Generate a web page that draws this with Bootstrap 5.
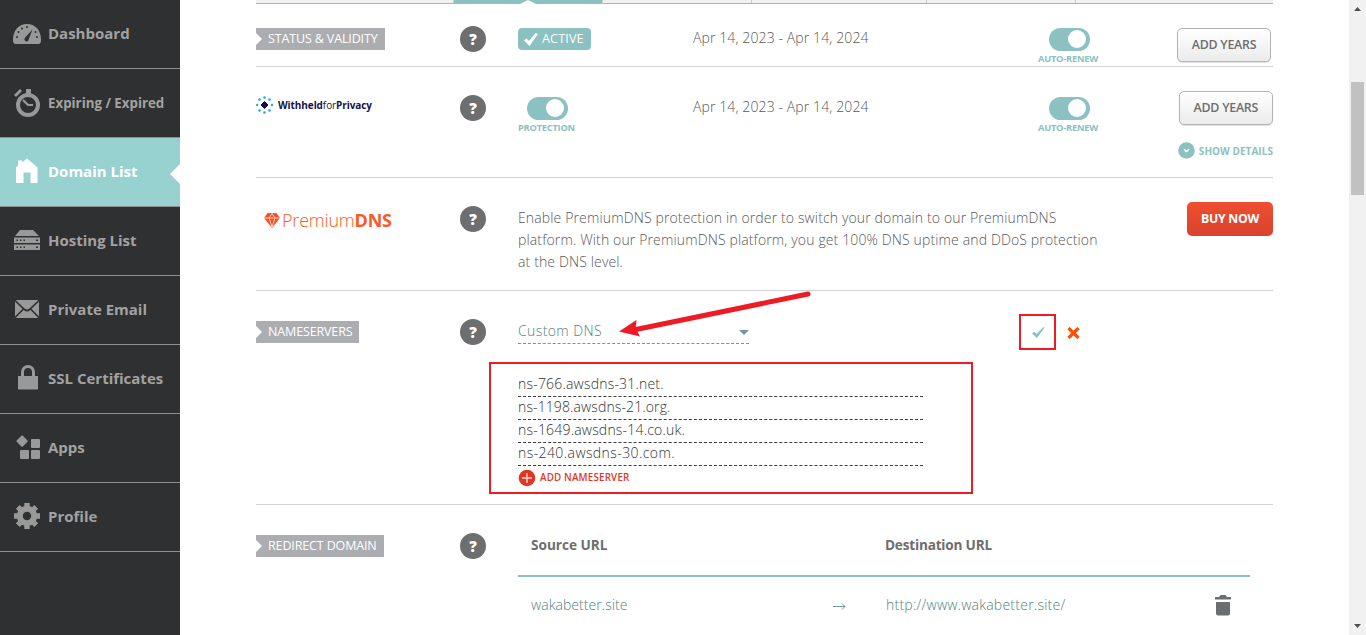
<!DOCTYPE html>
<html lang="en">
<head>
<meta charset="utf-8">
<title>Domain details</title>
<meta name="viewport" content="width=device-width, initial-scale=1">
<link href="https://cdn.jsdelivr.net/npm/bootstrap@5.3.0/dist/css/bootstrap.min.css" rel="stylesheet">
<script src="https://cdn.jsdelivr.net/npm/bootstrap@5.3.0/dist/js/bootstrap.bundle.min.js" defer></script>
<style>
html,body{height:100%;overflow:hidden}
body{font:14px/22px "Open Sans","Noto Sans",sans-serif;color:#6d6e70;background:#fff}
.app{height:635px}
/* sidebar */
.side{width:180px;background:#2f3031}
.side .nav-link{height:69px;padding:0;border-bottom:1px solid #8e8f90;color:#a2a2a2;font-weight:700;font-size:15px;position:relative}
.side .ico{width:48px;padding-left:12px;color:#999}
.side .ico svg{display:block}
.side .nav-link.active{background:#97d2d0;color:#fff}
.side .nav-link.active .ico{color:#fff}
.side .nav-link.active:after{content:"";position:absolute;right:0;top:26px;border:10px solid transparent;border-right-color:#fff;border-left:0}
.side .nav-link .lbl{padding-bottom:3px}
.side .fs-exp{font-size:13.3px}
/* main */
.main{width:1017px;margin-left:76px}
.tabs{height:4px;border-bottom:1px solid #8cc1c1;background:#f1f1f1}
.tabs span{height:3px;border-right:1px solid #ccc}
.tabs .on{background:#8cc1c1;height:4px;position:relative}
.tabs .on:after{content:"";position:absolute;left:66px;bottom:0;border:8px solid transparent;border-bottom:4px solid #fff;border-top:0}
.rowline{border-bottom:1px solid #d3d3d3;position:relative}
.c-label{width:204px}.c-help{width:58px}
.tag{display:inline-block;vertical-align:top;height:22px;line-height:21px;padding:0 7px 0 12px;background:#acadb1;color:#fff;font-size:12.5px;letter-spacing:-.14px;position:relative}
.tag:before{content:"";position:absolute;left:0;top:5px;border:6px solid transparent;border-left-color:#fff;border-right:0}
.help{width:26px;height:26px;border-radius:50%;background:#6d6e70;color:#fff;font-weight:800;font-size:15px;line-height:26px;text-align:center}
.pill{width:73px;height:22px;border-radius:4px;background:#8cc1c1;color:#fff;font-size:12.5px;line-height:21px;padding-left:6px;letter-spacing:.2px}
.pill span{padding-bottom:1px}
.switch{width:41px;height:23px;border-radius:12px;background:#8cc1c1;padding:2px 4px 0 19px}
.switch i{display:block;width:18px;height:18px;border-radius:50%;background:#fff}
.cap{font-size:9.3px;font-weight:700;line-height:14px;color:#8cc1c1;letter-spacing:-.24px;padding-top:1px}
.details{font-size:10px;letter-spacing:.05px;gap:4px;margin-top:16px}
.sw{width:60px}
.btn-years{width:94px;height:34px;padding:0;border:1px solid #b3b3b5;border-radius:5px;background:linear-gradient(#fff,#ebebeb);color:#6d6e70;font-size:12.4px;letter-spacing:-.25px;font-weight:600;box-shadow:0 1px 1px #0002}
.btn-buy{width:86px;height:34px;padding:0;border:0;border-radius:5px;background:linear-gradient(#f04e30,#d8432d);color:#fff;font-size:12.3px;letter-spacing:-.3px;font-weight:700}
.light{font-weight:300;color:#57585a}
.dates{letter-spacing:.11px}
.blurb{letter-spacing:.137px}
.light.teal{color:#4f8381}
.sel{width:231px;height:24px;border-bottom:1px dashed #6d9997;letter-spacing:.4px}
.ns{width:405px;height:23px;border-bottom:1px dashed #3c3c3c;color:#333;line-height:20px;letter-spacing:.2px}
.ns-4{letter-spacing:.42px}
.addns{color:#de3723;font-size:9.8px;font-weight:600;letter-spacing:.18px;line-height:22px}
.addns span{padding-top:1px}
.mark-box{position:absolute;border:2px solid #ed1c24}
.bar{width:17px;background:#f1f1f1}
.thumb{width:13px;height:113px;background:#c1c1c1;margin:auto 0 423px}
.redir{width:732px}
.rhead{height:44px;border-bottom:2px solid #8cc1c1;font-weight:700;font-size:13.6px}
.premium{color:#f95a27;font-size:18px;letter-spacing:-.2px;margin-left:2px}
.premium .light{color:#f95a27}
.withheld{color:#170f49;font-size:10px;letter-spacing:-.08px;margin-left:4px}
</style>
</head>
<body>
<div class="app d-flex">
<nav class="side nav flex-column flex-nowrap flex-shrink-0">
 <a class="nav-link d-flex align-items-center"><span class="ico"><svg width="30" height="30" viewBox="0 0 30 30"><path fill="currentColor" d="M3.500 25Q1 25 1 21C1 11 7 5 15 5s14 6 14 16q0 4-2.500 4Z"/><g fill="#2f3031"><circle cx="5" cy="18" r="1"/><circle cx="6.500" cy="13" r="1"/><circle cx="10" cy="9.500" r="1"/><circle cx="15" cy="8" r="1"/><circle cx="23.500" cy="13" r="1"/><circle cx="25" cy="18" r="1"/><path d="M20.500 10.500 16.800 20a2.200 2.200 0 1 1-3.600-1.500Z"/></g></svg></span><span class="lbl">Dashboard</span></a>
 <a class="nav-link d-flex align-items-center"><span class="ico"><svg width="30" height="30" viewBox="0 0 30 30"><circle cx="16" cy="17" r="10" fill="none" stroke="currentColor" stroke-width="4"/><path fill="currentColor" d="M14 1h5v5h-5ZM2 7l6-6 2 2-6 6Z"/><path d="m11 12 5 5h5" stroke="currentColor" stroke-width="2.200" fill="none"/></svg></span><span class="fs-exp">Expiring / Expired</span></a>
 <a class="nav-link active d-flex align-items-center"><span class="ico"><svg width="30" height="30" viewBox="0 0 30 30"><path fill="currentColor" d="M4 26V10.500l2-2V3.500h4v2l5-4L25.500 10.500V26H18.500V15.500h-7V26Z"/></svg></span><span class="lbl">Domain List</span></a>
 <a class="nav-link d-flex align-items-center"><span class="ico"><svg width="30" height="30" viewBox="0 0 30 30"><path fill="currentColor" d="M8 4h13l6 6H3ZM2 11.500h26V17H2ZM2 18.500h26V24H2Z"/><path fill="#2f3031" d="M4.500 13.500h1.500V15H4.500ZM8 13.500h1.500V15H8ZM11.500 13.500H13V15h-1.500ZM24 13.500h2V15h-2ZM4.500 20.500h1.500V22H4.500ZM8 20.500h1.500V22H8ZM11.500 20.500H13V22h-1.500ZM24 20.500h2V22h-2Z"/></svg></span><span class="lbl">Hosting List</span></a>
 <a class="nav-link d-flex align-items-center"><span class="ico"><svg width="30" height="30" viewBox="0 0 30 30"><path fill="currentColor" d="M3 5h24v18H3Z"/><path d="M2 4.500 12.500 14.500q2.500 2 5 0L28 4.500M3 22.500l8.500-8.500M27 22.500 18.500 14" fill="none" stroke="#2f3031" stroke-width="1.700"/></svg></span><span class="lbl">Private Email</span></a>
 <a class="nav-link d-flex align-items-center"><span class="ico"><svg width="30" height="30" viewBox="0 0 30 30"><path fill="currentColor" d="M6 12h20v13.500H6Z"/><path d="M10.500 12.500V8a5.500 5.500 0 0 1 11 0v4.500" fill="none" stroke="currentColor" stroke-width="3"/></svg></span><span class="lbl">SSL Certificates</span></a>
 <a class="nav-link d-flex align-items-center"><span class="ico"><svg width="30" height="30" viewBox="0 0 30 30"><g fill="currentColor" transform="translate(0 -1)"><rect x="5.800" y="4.800" width="8.600" height="8.600" rx="1" transform="rotate(45 10.100 9.100)"/><rect x="19" y="7" width="9" height="9" rx="1"/><rect x="8" y="18" width="9" height="9" rx="1"/><rect x="19" y="18" width="9" height="9" rx="1"/></g></svg></span><span class="lbl">Apps</span></a>
 <a class="nav-link d-flex align-items-center"><span class="ico"><svg width="30" height="30" viewBox="0 0 30 30"><g fill="none" stroke="currentColor" transform="translate(0 -1)"><circle cx="15" cy="15" r="7.200" stroke-width="6"/><path stroke-width="5.400" d="M15 2v4M15 24v4M2 15h4M24 15h4M5.800 5.800l3 3M21.200 21.200l3 3M5.800 24.200l3-3M21.200 8.800l3-3"/></g></svg></span><span class="lbl">Profile</span></a>
</nav>

<main class="main flex-shrink-0">
 <div class="tabs d-flex"><span style="width:198px"></span><span class="on" style="width:149px"></span><span style="width:149px"></span><span style="width:175px"></span><span style="width:149px"></span></div>

 <section class="rowline d-flex" style="height:63px">
  <div class="c-label" style="padding-top:24px"><span class="tag">STATUS &amp; VALIDITY</span></div>
  <div class="c-help" style="padding-top:22px"><div class="help">?</div></div>
  <div style="width:175px;padding-top:24px"><div class="pill d-flex align-items-center"><svg width="14" height="13" viewBox="0 0 14 13" class="me-1"><path d="M0 7.500 2.500 5.200 5 8 11.500 0 14 1 5.500 13Z" fill="#fff"/></svg><span>ACTIVE</span></div></div>
  <div class="light dates" style="width:345px;padding-top:23px">Apr 14, 2023 - Apr 14, 2024</div>
  <div class="sw" style="padding-top:24px"><div class="switch" style="margin-left:11px"><i></i></div><div class="cap text-nowrap">AUTO-RENEW</div></div>
  <div class="ms-auto" style="padding:24px 2px 0 0"><button class="btn btn-years">ADD YEARS</button></div>
 </section>

 <section class="rowline d-flex" style="height:111px">
  <div class="c-label d-flex align-items-start" style="padding-top:27px"><svg width="18" height="18" viewBox="0 0 18 18" style="margin-top:2px"><path d="M8.500 5.500 12 9l-3.500 3.500L5 9Z" fill="#170f49" stroke="#170f49" stroke-linejoin="round"/><g fill="#29a5e8"><circle cx="8.500" cy="1.500" r="1.300"/><circle cx="8.500" cy="16.500" r="1.300"/><circle cx="1.200" cy="9" r="1.200"/><circle cx="16" cy="9" r="1.200"/><circle cx="3.500" cy="3.500" r="1.300"/><circle cx="13.500" cy="3.500" r="1.300"/><circle cx="3.500" cy="14.500" r="1.300"/><circle cx="13.500" cy="14.500" r="1.300"/></g></svg><span class="withheld"><b>Withheld</b>for<b>Privacy</b></span></div>
  <div class="c-help" style="padding-top:28px"><div class="help">?</div></div>
  <div style="width:175px;padding-top:30px"><div class="switch" style="margin-left:9px"><i></i></div><div class="cap">PROTECTION</div></div>
  <div class="light dates" style="width:345px;padding-top:29px">Apr 14, 2023 - Apr 14, 2024</div>
  <div class="sw" style="padding-top:30px"><div class="switch" style="margin-left:11px"><i></i></div><div class="cap text-nowrap">AUTO-RENEW</div></div>
  <div class="ms-auto" style="padding-top:24px"><button class="btn btn-years d-block">ADD YEARS</button>
   <div class="cap details d-flex align-items-center text-nowrap"><svg width="17" height="17" viewBox="0 0 17 17" style="margin-left:-1px"><circle cx="8.500" cy="8.500" r="8.300" fill="#8cc1c1"/><path d="m6 7.200 2.500 2.300L11 7.200" fill="none" stroke="#fff" stroke-width="1.500"/></svg><span>SHOW DETAILS</span></div></div>
 </section>

 <section class="rowline d-flex" style="height:113px">
  <div class="c-label d-flex align-items-start" style="padding:31px 0 0 8px"><svg width="16" height="15" viewBox="0 0 16 15" style="margin-top:4px"><path d="M3.500 0h9L16 5l-8 10L0 5Z" fill="#fd4f23"/><path d="M0 5h16M5 5l3 9 3-9M5 5l3-4.500L11 5" fill="none" stroke="#fff" stroke-width=".7"/></svg><span class="premium"><span class="light">Premium</span><b>DNS</b></span></div>
  <div class="c-help" style="padding-top:28px"><div class="help">?</div></div>
  <div class="light blurb text-nowrap" style="padding-top:29px">Enable PremiumDNS protection in order to switch your domain to our PremiumDNS<br>platform. With our PremiumDNS platform, you get 100% DNS uptime and DDoS protection<br>at the DNS level.</div>
  <div class="ms-auto" style="padding-top:24px"><button class="btn btn-buy">BUY NOW</button></div>
 </section>

 <section class="rowline d-flex" style="height:214px">
  <div class="c-label" style="padding-top:30px"><span class="tag">NAMESERVERS</span></div>
  <div class="c-help" style="padding-top:28px"><div class="help">?</div></div>
  <div style="padding-top:29px">
   <div class="sel light teal d-flex justify-content-between"><span>Custom DNS</span><svg width="10" height="5" viewBox="0 0 10 5" style="margin-top:10px"><path d="M0 0h10L5 5Z" fill="#6d9997"/></svg></div>
   <div class="light" style="padding-top:30px">
    <div class="ns">ns-766.awsdns-31.net.</div>
    <div class="ns" style="letter-spacing:.12px">ns-1198.awsdns-21.org.</div>
    <div class="ns">ns-1649.awsdns-14.co.uk.</div>
    <div class="ns ns-4">ns-240.awsdns-30.com.</div>
   </div>
   <div class="addns d-flex align-items-center"><svg width="18" height="18" viewBox="0 0 18 18" class="me-1"><circle cx="9" cy="9" r="8.300" fill="#de3723"/><path d="M9 4v10M4 9h10" stroke="#fbd3cd" stroke-width="1.400"/></svg><span>ADD NAMESERVER</span></div>
  </div>
  <div class="d-flex align-items-start" style="margin-left:109px;padding-top:36px;gap:22px"><svg width="13" height="12" viewBox="0 0 13 12"><path d="M0 6.500 2.200 4.500 4.500 7 11.500 0 12.500.8 4.800 11Z" fill="#8cc1c1"/></svg><svg width="13" height="12" viewBox="0 0 13 12"><path d="m1.500 1 10 10m0-10-10 10" stroke="#ff4f00" stroke-width="3.200"/></svg></div>
  <div class="mark-box" style="left:233px;top:71px;width:484px;height:132px"></div>
  <div class="mark-box" style="left:763px;top:23px;width:37px;height:36px"></div>
  <svg class="position-absolute" style="left:360px;top:-3px" width="200" height="55" viewBox="0 0 200 55"><path d="M192 6 20 41.500" stroke="#ed1c24" stroke-width="5" stroke-linecap="round"/><path d="M3 43.500 20.500 32l-.8 8 4.300 8.500Z" fill="#ed1c24"/></svg>
 </section>

 <section class="d-flex" style="height:130px">
  <div class="c-label" style="padding-top:30px"><span class="tag">REDIRECT DOMAIN</span></div>
  <div class="c-help" style="padding-top:28px"><div class="help">?</div></div>
  <div class="redir" style="padding-top:28px">
   <div class="rhead d-flex"><div style="width:355px;padding:1px 0 0 13px">Source URL</div><div style="padding:1px 0 0 12px;letter-spacing:-.2px">Destination URL</div></div>
   <div class="d-flex light teal" style="padding:17px 0 0 13px"><div style="width:302px;letter-spacing:.05px">wakabetter.site</div><div style="width:53px"><svg width="13" height="9" viewBox="0 0 13 9"><path d="M0 4.500h12M9 1.500l3 3-3 3" fill="none" stroke="#6d9997"/></svg></div><div style="letter-spacing:.24px">http://www.wakabetter.site/</div><svg width="16" height="21" viewBox="0 0 16 21" class="ms-auto" style="margin:1px 19px 0 0"><path fill="#6d6e70" d="M0 2h4l1.500-2h5L12 2h4v2.500H0ZM1 7h14v11.500q0 2-2 2H3q-2 0-2-2Z"/></svg></div>
  </div>
 </section>
</main>

<div class="bar ms-auto d-flex flex-column align-items-center flex-shrink-0"><svg width="17" height="17" class="flex-shrink-0"><path d="M5 11h7l-3.500-4Z" fill="#505050"/></svg><div class="thumb flex-shrink-0"></div><svg width="17" height="17" class="flex-shrink-0"><path d="M5 6h7l-3.500 4Z" fill="#505050"/></svg></div>
</div>
</body>
</html>
